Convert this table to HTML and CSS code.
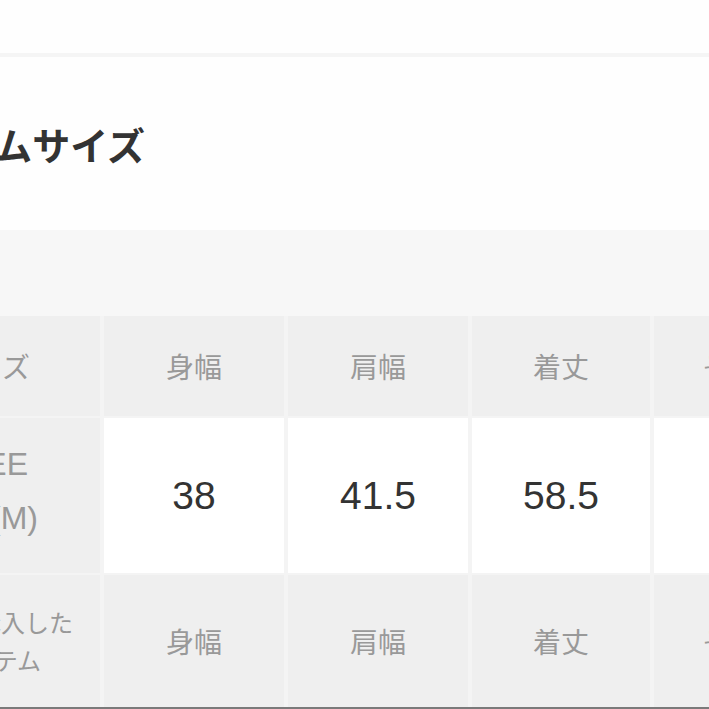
FILE: index.html
```html
<!DOCTYPE html>
<html lang="ja">
<head>
<meta charset="utf-8">
<title>アイテムサイズ</title>
<link rel="stylesheet" href="styles.css">
</head>
<body>
<div class="top"></div>
<div class="rule"></div>
<section class="heading">
  <h1 class="heading-title">アイテムサイズ</h1>
</section>
<div class="band"></div>
<div class="sizes">
  <div class="label label-head"><span class="line line-size">サイズ</span></div>
  <div class="th">身幅</div>
  <div class="th">肩幅</div>
  <div class="th">着丈</div>
  <div class="th">そで丈</div>

  <div class="label label-free">
    <span class="line line-free">FREE</span>
    <span class="line line-m">(M)</span>
  </div>
  <div class="td">38</div>
  <div class="td">41.5</div>
  <div class="td">58.5</div>
  <div class="td"></div>

  <div class="label label-bought">
    <span class="line line-bought">ご購入した</span>
    <span class="line line-item">アイテム</span>
  </div>
  <div class="th">身幅</div>
  <div class="th">肩幅</div>
  <div class="th">着丈</div>
  <div class="th">そで丈</div>
</div>
</body>
</html>
```
FILE: styles.css
```css
html, body {
  margin: 0;
  padding: 0;
  overflow: hidden;
  background: #fefefe;
}

.top {
  height: 53px;
}

.rule {
  height: 4px;
  background: #f5f5f5;
}

.heading {
  height: 173px;
  display: flex;
  align-items: center;
}

.heading-title {
  margin: 0 0 0 -116px;
  font: 700 38px/1 "Noto Sans CJK JP", sans-serif;
  color: #333;
  white-space: nowrap;
}

.band {
  height: 86px;
  background: #f7f7f7;
}

.sizes {
  display: grid;
  grid-template-columns: 180px 180px 180px 178px 180px;
  grid-template-rows: 100px 155px 132px;
  gap: 2px 4px;
  width: max-content;
  margin-left: -80px;
  background: #f4f4f4;
  border-bottom: 2px solid #7a7a7a;
}

.th {
  background: #efefef;
  display: flex;
  align-items: center;
  justify-content: center;
  color: #999;
  font: 400 28px/1 "Noto Sans CJK JP", sans-serif;
  white-space: nowrap;
}

.td {
  background: #fff;
  display: flex;
  align-items: center;
  justify-content: center;
  color: #333;
  font: 400 39px/1 "Liberation Sans", Arial, sans-serif;
}

.label {
  background: #efefef;
  display: flex;
  flex-direction: column;
  justify-content: center;
  align-items: flex-end;
  color: #999;
  white-space: nowrap;
}

.label-head {
  font: 400 28px/1 "Noto Sans CJK JP", sans-serif;
}

.label-free {
  font: 400 32px/54px "Liberation Sans", Arial, sans-serif;
  padding-bottom: 9px;
}

.label-bought {
  font: 400 24px/38px "Noto Sans CJK JP", sans-serif;
}

.line-size { margin-right: 70px; }
.line-free { margin-right: 72px; }
.line-m { margin-right: 62px; }
.line-bought { margin-right: 27px; }
.line-item { margin-right: 59px; }
```
